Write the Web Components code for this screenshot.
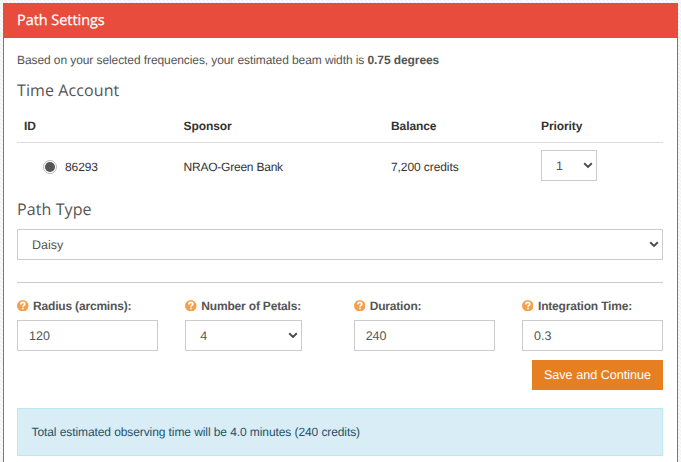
<!DOCTYPE html>
<html lang="en">
<head>
<meta charset="utf-8">
<title>Path Settings</title>
<style>
html,body{margin:0;height:462px;overflow:hidden}
body{font:12px/20px "Liberation Sans",Arial,sans-serif;letter-spacing:-.088px;text-rendering:geometricPrecision;color:#555;padding:3px 3px 0;box-sizing:border-box;
background:repeating-linear-gradient(45deg,#fafafa 0 1.4px,#f2f2f2 1.4px 2.8px)}
</style>
</head>
<body>
<settings-panel heading="Path Settings">
  <beam-summary>Based on your selected frequencies, your estimated beam width is <b>0.75 degrees</b></beam-summary>
  <section-title>Time Account</section-title>
  <account-table></account-table>
  <section-title>Path Type</section-title>
  <select-box pad="14">Daisy</select-box>
  <path-form></path-form>
  <action-bar>Save and Continue</action-bar>
  <info-alert>Total estimated observing time will be 4.0 minutes (240 credits)</info-alert>
</settings-panel>
<script>
const define = (name, markup) => customElements.define(name, class extends HTMLElement {
  connectedCallback() {
    if (this.shadowRoot) return;
    this.attachShadow({mode: 'open'}).innerHTML = typeof markup === 'function' ? markup(this) : markup;
  }
});

define('settings-panel', el => `<style>
:host{display:block;box-sizing:border-box;width:675px;height:470px;border:1px solid #e84c3d;background:#fff}
header{height:34px;background:#e84c3d;color:#fff;font:500 14.5px/33px "Open Sans",sans-serif;padding-left:13px;letter-spacing:-.05px;-webkit-text-stroke:.25px #fff}
main{padding:12px 14px 0 13px}
</style><header>${el.getAttribute('heading')}</header><main><slot></slot></main>`);

define('beam-summary', `<style>:host{display:block;height:20px;white-space:nowrap}</style><slot></slot>`);

define('section-title', `<style>:host{display:block;height:40px;font:400 16px/40px "Open Sans",sans-serif;white-space:nowrap;letter-spacing:.1px}</style><slot></slot>`);

define('select-box', el => `<style>
:host{display:flex;box-sizing:border-box;height:31px;border:1px solid #ccc;background:#fff;align-items:center;justify-content:space-between;
padding:0 3px 0 ${el.getAttribute('pad')}px;color:#555;font-size:12.5px;letter-spacing:0}
svg{display:block;width:10px;height:7px}
</style><span><slot></slot></span><svg viewBox="0 0 10 7"><path d="M1.2 1.3 5 5 8.8 1.3" fill="none" stroke="#4a4a4a" stroke-width="1.9"/></svg>`);

define('radio-mark', `<style>
:host{display:inline-flex;box-sizing:border-box;width:14px;height:14px;border:1px solid #bbb;border-radius:50%;align-items:center;justify-content:center;background:#fff}
i{width:10px;height:10px;border-radius:50%;background:#555}
</style><i></i>`);

define('account-table', `<style>
:host{display:block;height:79px;color:#333}
.row{display:grid;grid-template-columns:159.5px 207.5px 150px 1fr;padding-left:7px}
.head{line-height:32px;font-weight:bold;border-bottom:1px solid #ddd;box-sizing:border-box;height:33px}
.body{padding-top:7px;line-height:34px}
.id{display:flex;align-items:center;height:34px;padding-left:19px;gap:8px}
.sponsor{letter-spacing:-.22px}
select-box{width:56px;line-height:20px}
</style>
<div class="row head"><span>ID</span><span>Sponsor</span><span>Balance</span><span>Priority</span></div>
<div class="row body"><span class="id"><radio-mark></radio-mark><span>86293</span></span><span class="sponsor">NRAO-Green Bank</span><span>7,200 credits</span><select-box pad="14">1</select-box></div>`);

define('help-label', `<style>
:host{display:flex;align-items:center;gap:4.5px;height:24px;font-weight:bold;letter-spacing:-.18px;white-space:nowrap}
svg{display:block;width:11.5px;height:11.5px;margin-top:-1px}
</style><svg viewBox="0 0 11 11"><circle cx="5.5" cy="5.5" r="5.5" fill="#f0a04f"/><path d="M3.7 4.2C3.7 2.8 4.6 2.3 5.6 2.3 6.7 2.3 7.5 2.9 7.5 3.9 7.5 5.2 5.7 5.1 5.7 6.5M5.7 7.4V8.9" fill="none" stroke="#fff" stroke-width="1.6"/></svg><span><slot></slot></span>`);

define('text-box', `<style>:host{display:block;box-sizing:border-box;width:141px;height:31px;border:1px solid #ccc;padding-left:11px;line-height:30px;letter-spacing:0}</style><slot></slot>`);

define('path-form', `<style>
:host{display:grid;grid-template-columns:141px 141px 141px 141px;justify-content:space-between;margin-top:22px;border-top:1px solid #ccc;padding-top:11px}
help-label{margin-bottom:2px}
select-box{width:117px}
text-box,select-box{font-size:12.5px}
</style>
<div><help-label>Radius (arcmins):</help-label><text-box>120</text-box></div>
<div><help-label>Number of Petals:</help-label><select-box pad="14">4</select-box></div>
<div><help-label>Duration:</help-label><text-box>240</text-box></div>
<div><help-label>Integration Time:</help-label><text-box>0.3</text-box></div>`);

define('action-bar', `<style>
:host{display:flex;justify-content:flex-end;padding-top:9px}
button{all:unset;box-sizing:border-box;width:131px;height:30px;background:#e67f22;color:#fff;text-align:center;font-size:12.6px;letter-spacing:0;line-height:29px;white-space:nowrap}
</style><button><slot></slot></button>`);

define('info-alert', `<style>
:host{display:block;box-sizing:border-box;height:48px;margin-top:18px;border:1px solid #bce8f1;background:#d9edf7;color:#245269;padding-left:13.5px;line-height:46px}
</style><slot></slot>`);
</script>
</body>
</html>
